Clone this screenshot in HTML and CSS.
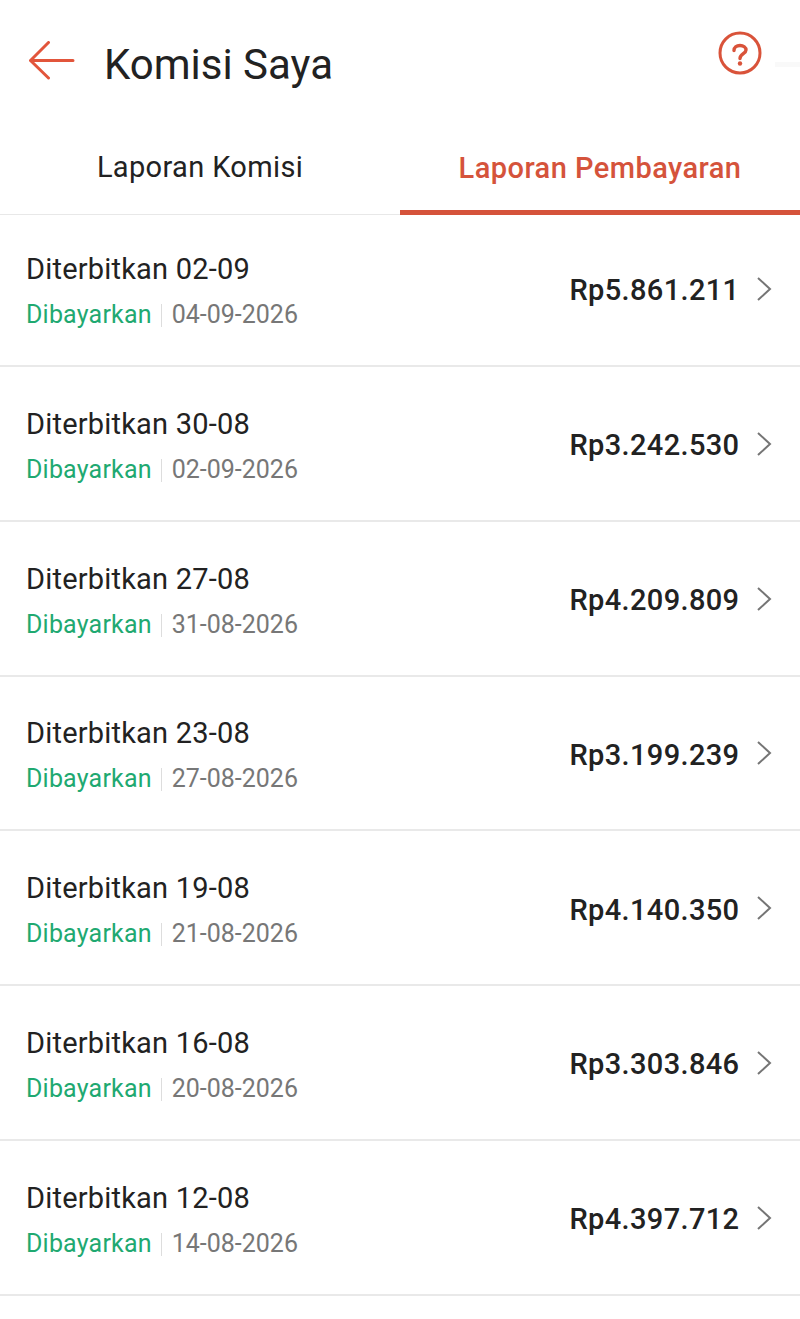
FILE: index.html
```html
<!DOCTYPE html>
<html lang="id">
<head>
    <meta charset="UTF-8">
    <meta name="viewport" content="width=device-width, initial-scale=1.0">
    <title>Komisi Saya</title>
    <link rel="stylesheet" href="styles.css">
</head>
<body>

<header class="topbar">
    <svg class="back-icon" width="46" height="40" viewBox="0 0 46 40" fill="none">
        <path d="M1.5 19.5H44M19.5 1.5L1.5 19.5L19.5 37" stroke="#e2553b" stroke-width="3" stroke-linecap="round" stroke-linejoin="round"/>
    </svg>
    <h1 class="title">Komisi Saya</h1>
    <svg class="help-icon" width="44" height="44" viewBox="0 0 44 44" fill="none">
        <circle cx="22" cy="22" r="20" stroke="#d9533a" stroke-width="3"/>
        <path d="M16 19.5C16 16.5 18.5 14.5 22 14.5C25.5 14.5 28 16.5 28 19C28 22.5 22 23 22 27.5" stroke="#d9533a" stroke-width="3.4" stroke-linecap="round"/>
        <circle cx="22" cy="32.5" r="2.2" fill="#d9533a"/>
    </svg>
    <div class="edge-mark"></div>
</header>

<nav class="tabs">
    <div class="tab">Laporan Komisi</div>
    <div class="tab tab-active">Laporan Pembayaran</div>
</nav>

<div class="list">
    <div class="row">
        <div class="row-info">
            <div class="row-title">Diterbitkan 02-09</div>
            <div class="row-status"><span class="paid">Dibayarkan</span><span class="date">04-09-2026</span></div>
        </div>
        <div class="amount">Rp5.861.211</div>
        <svg class="chevron" width="16" height="26" viewBox="0 0 16 26" fill="none"><path d="M2 2L14 13L2 24" stroke="#757575" stroke-width="2"/></svg>
    </div>
    <div class="row">
        <div class="row-info">
            <div class="row-title">Diterbitkan 30-08</div>
            <div class="row-status"><span class="paid">Dibayarkan</span><span class="date">02-09-2026</span></div>
        </div>
        <div class="amount">Rp3.242.530</div>
        <svg class="chevron" width="16" height="26" viewBox="0 0 16 26" fill="none"><path d="M2 2L14 13L2 24" stroke="#757575" stroke-width="2"/></svg>
    </div>
    <div class="row">
        <div class="row-info">
            <div class="row-title">Diterbitkan 27-08</div>
            <div class="row-status"><span class="paid">Dibayarkan</span><span class="date">31-08-2026</span></div>
        </div>
        <div class="amount">Rp4.209.809</div>
        <svg class="chevron" width="16" height="26" viewBox="0 0 16 26" fill="none"><path d="M2 2L14 13L2 24" stroke="#757575" stroke-width="2"/></svg>
    </div>
    <div class="row">
        <div class="row-info">
            <div class="row-title">Diterbitkan 23-08</div>
            <div class="row-status"><span class="paid">Dibayarkan</span><span class="date">27-08-2026</span></div>
        </div>
        <div class="amount">Rp3.199.239</div>
        <svg class="chevron" width="16" height="26" viewBox="0 0 16 26" fill="none"><path d="M2 2L14 13L2 24" stroke="#757575" stroke-width="2"/></svg>
    </div>
    <div class="row">
        <div class="row-info">
            <div class="row-title">Diterbitkan 19-08</div>
            <div class="row-status"><span class="paid">Dibayarkan</span><span class="date">21-08-2026</span></div>
        </div>
        <div class="amount">Rp4.140.350</div>
        <svg class="chevron" width="16" height="26" viewBox="0 0 16 26" fill="none"><path d="M2 2L14 13L2 24" stroke="#757575" stroke-width="2"/></svg>
    </div>
    <div class="row">
        <div class="row-info">
            <div class="row-title">Diterbitkan 16-08</div>
            <div class="row-status"><span class="paid">Dibayarkan</span><span class="date">20-08-2026</span></div>
        </div>
        <div class="amount">Rp3.303.846</div>
        <svg class="chevron" width="16" height="26" viewBox="0 0 16 26" fill="none"><path d="M2 2L14 13L2 24" stroke="#757575" stroke-width="2"/></svg>
    </div>
    <div class="row">
        <div class="row-info">
            <div class="row-title">Diterbitkan 12-08</div>
            <div class="row-status"><span class="paid">Dibayarkan</span><span class="date">14-08-2026</span></div>
        </div>
        <div class="amount">Rp4.397.712</div>
        <svg class="chevron" width="16" height="26" viewBox="0 0 16 26" fill="none"><path d="M2 2L14 13L2 24" stroke="#757575" stroke-width="2"/></svg>
    </div>
</div>

</body>
</html>
```

FILE: styles.css
```css
* {
    box-sizing: border-box;
    margin: 0;
    padding: 0;
}

body {
    font-family: Roboto, 'Liberation Sans', sans-serif;
    background-color: #fff;
    color: #222;
    height: 1319px;
    overflow: hidden;
}

.topbar {
    height: 126px;
    display: flex;
    align-items: flex-start;
    padding: 31px 38px 0 28.5px;
    position: relative;
}

.back-icon {
    margin-top: 10px;
    flex-shrink: 0;
}

.title {
    font-size: 42px;
    font-weight: 400;
    line-height: 48px;
    margin: 10px 0 0 29.5px;
    flex: 1;
}

.help-icon {
    flex-shrink: 0;
}

.edge-mark {
    position: absolute;
    right: 0;
    top: 62px;
    width: 25px;
    height: 5px;
    background-color: #f9f9f9;
}

.tabs {
    display: flex;
    height: 89px;
    border-bottom: 1px solid #e8e8e8;
}

.tab {
    flex: 1;
    text-align: center;
    font-size: 29px;
    line-height: 34px;
    padding-top: 24px;
    letter-spacing: 0.35px;
}

.tab-active {
    color: #d5533b;
    font-weight: 500;
    letter-spacing: 0.45px;
    height: 89px;
    padding-top: 25px;
    border-bottom: 5px solid #d5533b;
}

.row {
    height: 154.8px;
    display: flex;
    align-items: center;
    padding: 0 26px;
    border-bottom: 2px solid #e9e9e9;
}

/* first row sits tighter under the tabs */
.row:first-child {
    height: 152px;
    padding-bottom: 3px;
}

.row-info {
    flex: 1;
    padding-top: 5px;
}

.row-title {
    font-size: 29px;
    line-height: 34px;
    letter-spacing: 0.2px;
}

.row-status {
    display: flex;
    align-items: center;
    font-size: 25px;
    line-height: 30px;
    margin-top: 14px;
}

.paid {
    color: #1fa971;
    letter-spacing: 0.2px;
}

.date {
    color: #777;
    margin-left: 9.5px;
    padding-left: 10.5px;
    position: relative;
}

.date::before {
    content: '';
    position: absolute;
    left: 0;
    top: 4px;
    bottom: 3px;
    border-left: 1px solid #ddd;
}

.amount {
    font-size: 29px;
    font-weight: 500;
    letter-spacing: 0.35px;
    margin-right: 16.6px;
    padding-top: 3.6px;
}

.chevron {
    margin: 1px 2px 0 0;
    flex-shrink: 0;
}
```
